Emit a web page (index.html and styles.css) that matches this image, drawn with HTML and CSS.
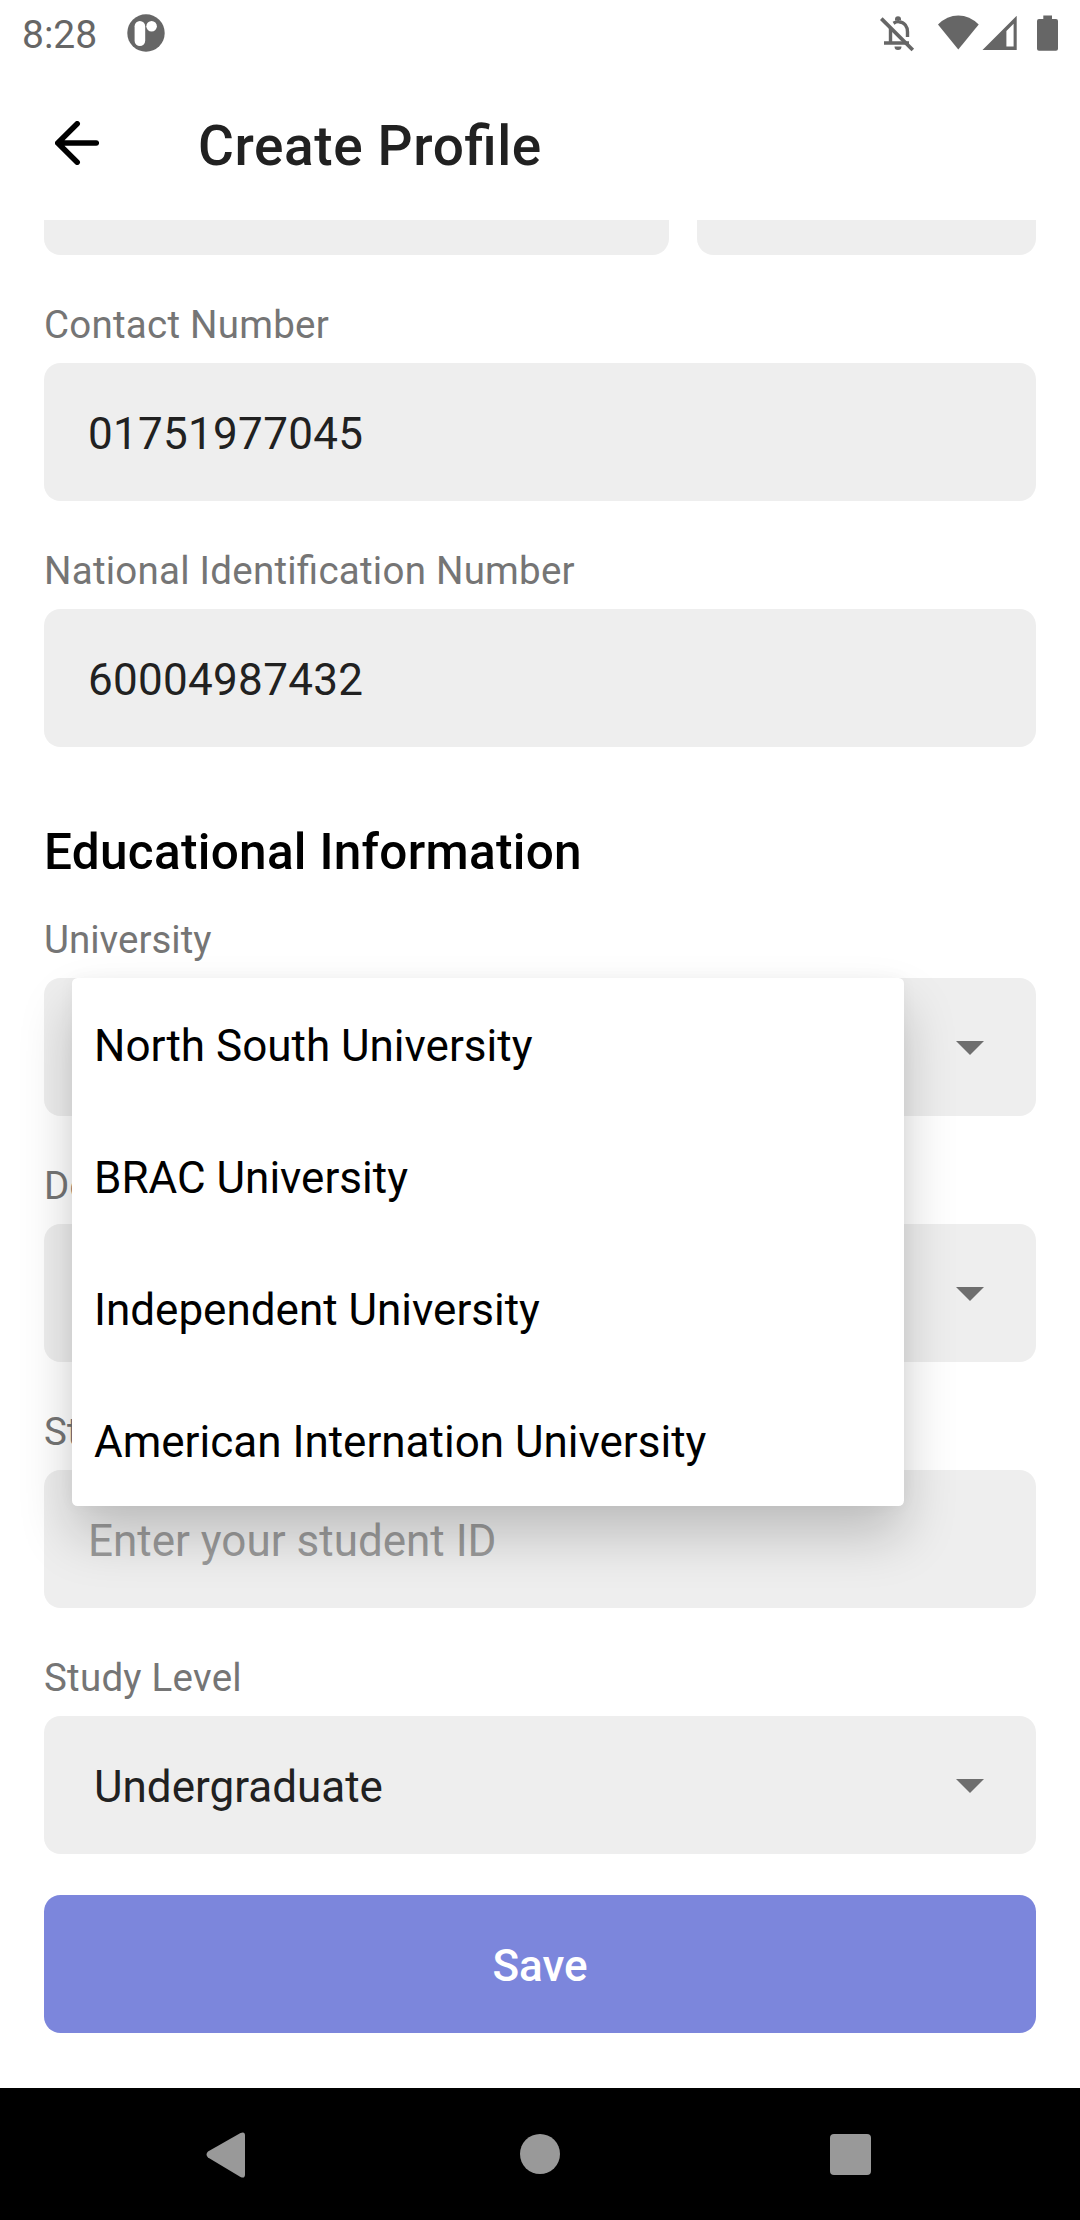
FILE: index.html
```html
<!DOCTYPE html>
<html lang="en">
<head>
<meta charset="utf-8">
<title>Create Profile</title>
<link rel="stylesheet" href="styles.css">
</head>
<body>
<div class="screen">
  <header class="status">
    <span class="clock">8:28</span>
    <svg class="app-badge" width="38" height="38" viewBox="0 0 38 38"><circle cx="19" cy="19" r="18.7" fill="#666"/><rect x="7.6" y="7" width="10.6" height="25" rx="5.3" fill="#fff"/><circle cx="24.6" cy="12.3" r="5.3" fill="#fff"/></svg>
    <svg class="indicators" width="190" height="52" viewBox="0 0 190 52" fill="#666">
      <g fill="none" stroke="#666" stroke-width="3.4">
        <path d="M10.5 28v14.500M4 43h25M13.500 23.200c2-1.200 4-1.700 5.500-1.500 5.500.6 8.500 5 8.500 10.300v5"/>
        <path d="M1.300 18.600 32.800 50" stroke-width="3.700"/>
      </g>
      <path d="M15 20.500v-1.200a3 3 0 0 1 6 0v1.200zM14.500 46.500h7a3.500 3.500 0 0 1-7 0z"/>
      <path d="M58 24.500Q67 15.500 78.300 15.500T98.700 24.500L78.300 49.500z"/>
      <path fill-rule="evenodd" d="M102.500 50 136.700 15.700V50zM126.400 31v15.500h7.200V23.700z"/>
      <path d="M163.300 15.500h8.700v3.500h4a2 2 0 0 1 2 2v27.700a2 2 0 0 1-2 2h-17a2 2 0 0 1-2-2V21a2 2 0 0 1 2-2h4.300z"/>
    </svg>
  </header>
  <div class="appbar">
    <svg class="back" width="44" height="44" viewBox="0 0 44 44" fill="none" stroke="#000" stroke-width="5.500" stroke-linecap="round" stroke-linejoin="round"><path d="M41.300 22H2.800M22.200 2.800 2.800 22l19.400 19.200"/></svg>
    <h1 class="title">Create Profile</h1>
  </div>
  <main class="form">
    <div class="split"><div class="cut wide"></div><div class="cut"></div></div>
    <label class="label">Contact Number</label>
    <div class="field number">01751977045</div>
    <label class="label">National Identification Number</label>
    <div class="field number">60004987432</div>
    <h2 class="section">Educational Information</h2>
    <label class="label after-section">University</label>
    <div class="anchor">
      <div class="field select"><span></span><svg class="caret" width="28" height="14" viewBox="0 0 28 14"><path d="M0 0h28L14 14z"/></svg></div>
      <ul class="menu">
        <li>North South University</li>
        <li>BRAC University</li>
        <li>Independent University</li>
        <li>American Internation University</li>
      </ul>
    </div>
    <label class="label">Department</label>
    <div class="field select"><span></span><svg class="caret" width="28" height="14" viewBox="0 0 28 14"><path d="M0 0h28L14 14z"/></svg></div>
    <label class="label">Student ID</label>
    <div class="field hint">Enter your student ID</div>
    <label class="label">Study Level</label>
    <div class="field select"><span>Undergraduate</span><svg class="caret" width="28" height="14" viewBox="0 0 28 14"><path d="M0 0h28L14 14z"/></svg></div>
    <button class="save">Save</button>
  </main>
  <nav class="navbar">
    <svg width="1080" height="132" viewBox="0 0 1080 132" fill="#999"><path d="M208 63.500 240.500 45q4.500-2 4.500 2.500v39q0 4.500-4.500 2.500L208 69.500q-3-3 0-6z"/><circle cx="540" cy="66" r="20"/><rect x="830" y="46" width="41" height="41" rx="4"/></svg>
  </nav>
</div>
</body>
</html>
```
FILE: styles.css
```css
* { box-sizing: border-box; }
body { margin: 0; background: #fff; font-family: Roboto, "Liberation Sans", sans-serif; }
.screen { width: 1080px; height: 2220px; display: flex; flex-direction: column; overflow: hidden; font-feature-settings: "liga" 1; }
.status { height: 66px; display: flex; align-items: flex-start; padding-left: 22px; flex: none; }
.clock { font-size: 39px; line-height: 46px; color: #666; margin-top: 12px; width: 105px; }
.app-badge { margin-top: 14px; }
.indicators { margin-left: 715px; }
.appbar { height: 154px; display: flex; align-items: center; padding-left: 55px; flex: none; }
.title { margin: 5px 0 0 99px; font-size: 55px; line-height: 64px; font-weight: 500; letter-spacing: .6px; color: #212121; }
.form { height: 1868px; flex: none; padding: 0 44px; display: flex; flex-direction: column; }
.split { display: flex; gap: 28px; }
.cut { height: 35px; width: 339px; background: #eee; border-radius: 0 0 16.500px 16.500px; }
.cut.wide { width: 625px; }
.label { display: block; margin: 47px 0 16px; height: 45px; font-size: 38.500px; line-height: 45px; letter-spacing: .24px; color: #757575; }
.field { height: 138px; flex: none; border-radius: 16.500px; background: #eee; padding: 4px 44px 0; display: flex; align-items: center; font-size: 44px; color: #212121; }
.field.number { letter-spacing: .29px; }
.field.select { justify-content: space-between; padding: 4px 52px 0 50px; }
.field.hint { color: #9a9a9a; }
.caret { margin-top: -2px; fill: #6e6e6e; }
.section { margin: 76px 0 0; height: 58px; font-size: 49.500px; line-height: 58px; font-weight: 500; letter-spacing: .3px; color: #000; }
.label.after-section { margin-top: 36px; letter-spacing: 0; }
.anchor { position: relative; }
.menu { position: absolute; z-index: 2; left: 28px; top: 0; width: 832px; margin: 0; padding: 0; list-style: none; background: #fff; border-radius: 5.500px; box-shadow: 0 30px 54px rgba(0,0,0,.2), 0 0 16px rgba(0,0,0,.04); }
.menu li { height: 132px; display: flex; align-items: center; padding: 4px 22px 0; font-size: 44px; color: #000; }
.save { margin-top: 41px; height: 138px; border: 0; border-radius: 16.500px; background: #7c86dc; color: #fff; font: 500 44px Roboto, sans-serif; padding: 4px 0 0; }
.navbar { height: 132px; background: #000; flex: none; }
.navbar svg { display: block; }
```
